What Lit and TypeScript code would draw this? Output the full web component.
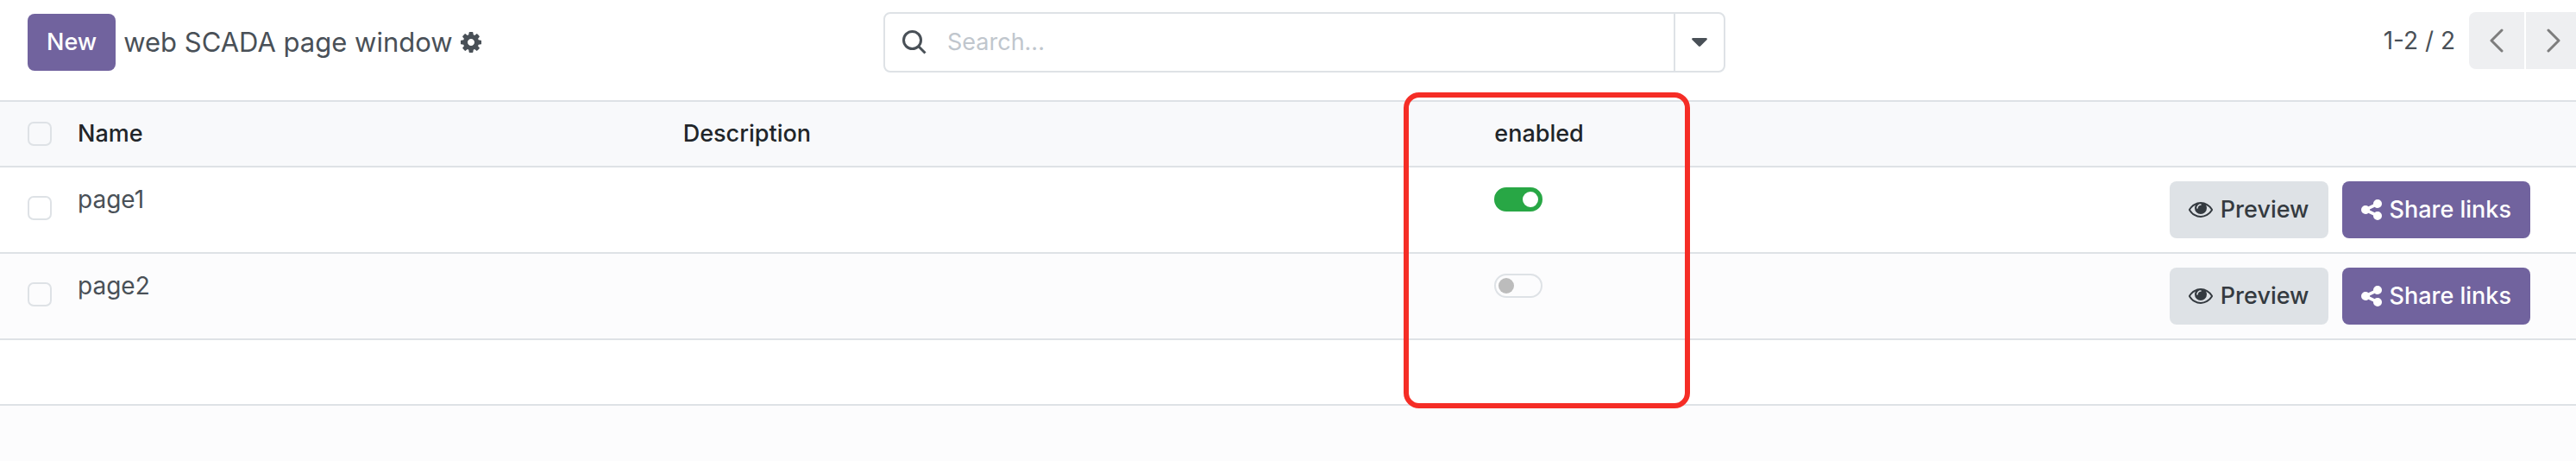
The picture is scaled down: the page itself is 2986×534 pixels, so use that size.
import { LitElement, html, css, svg } from "lit";
import { customElement, state } from "lit/decorators.js";

interface PageRow {
  name: string;
  description: string;
  enabled: boolean;
}

const cogIcon = html`<svg class="icon" width="24" height="24" viewBox="128 128 1536 1536" aria-hidden="true">
  ${svg`<path d="M1152 896q0-106-75-181t-181-75-181 75-75 181 75 181 181 75 181-75 75-181zm512-109v222q0 12-8 23t-20 13l-185 28q-19 54-39 91 35 50 107 138 10 12 10 25t-9 23q-27 37-99 108t-94 71q-12 0-26-9l-138-108q-44 23-91 38-16 136-29 186-7 28-36 28h-222q-14 0-24.5-8.5t-11.5-21.5l-28-184q-49-16-90-37l-141 107q-10 9-25 9-14 0-25-11-126-114-165-168-7-10-7-23 0-12 8-23 15-21 51-66.5t54-70.5q-27-50-41-99l-183-27q-13-2-21-12.5t-8-23.5v-222q0-12 8-23t19-13l186-28q14-46 39-92-40-57-107-138-10-12-10-24 0-10 9-23 26-36 98.5-107.5t94.5-71.5q13 0 26 10l138 107q44-23 91-38 16-136 29-186 7-28 36-28h222q14 0 24.5 8.5t11.5 21.5l28 184q49 16 90 37l142-107q9-9 24-9 13 0 25 10 129 119 165 170 7 8 7 22 0 12-8 23-15 21-51 66.5t-54 70.5q26 50 41 98l183 28q13 2 21 12.5t8 23.5z"/>`}
</svg>`;

const eyeIcon = html`<svg class="icon" width="28" height="18" viewBox="0 384 1792 1152" aria-hidden="true">
  ${svg`<path d="M1664 960q-152-236-381-353 61 104 61 225 0 185-131.5 316.5t-316.5 131.5-316.5-131.5-131.5-316.5q0-121 61-225-229 117-381 353 133 205 333.5 326.5t434.5 121.5 434.5-121.5 333.5-326.5zm-720-384q0-20-14-34t-34-14q-125 0-214.5 89.5t-89.5 214.5q0 20 14 34t34 14 34-14 14-34q0-86 61-147t147-61q20 0 34-14t14-34zm848 384q0 34-20 69-140 230-376.5 368.5t-499.5 138.5-499.5-139-376.5-368q-20-35-20-69t20-69q140-229 376.5-368t499.5-139 499.5 139 376.5 368q20 35 20 69z"/>`}
</svg>`;

const shareIcon = html`<svg class="icon" width="24" height="24" viewBox="128 128 1536 1536" aria-hidden="true">
  ${svg`<path d="M1344 1024q133 0 226.5 93.5t93.5 226.5-93.5 226.5-226.5 93.5-226.5-93.5-93.5-226.5q0-12 2-34l-360-180q-92 86-218 86-133 0-226.5-93.5t-93.5-226.5 93.5-226.5 226.5-93.5q126 0 218 86l360-180q-2-22-2-34 0-133 93.5-226.5t226.5-93.5 226.5 93.5 93.5 226.5-93.5 226.5-226.5 93.5q-126 0-218-86l-360 180q2 22 2 34t-2 34l360 180q92-86 218-86z"/>`}
</svg>`;

const searchIcon = html`<svg width="28" height="28" viewBox="0 0 28 28" fill="none" stroke="currentColor" stroke-width="3" aria-hidden="true">
  ${svg`<circle cx="11.5" cy="11.5" r="10"/><path d="M18.5 18.5l8 8"/>`}
</svg>`;

const caretIcon = html`<svg class="icon" width="18" height="10" viewBox="0 0 18 10" aria-hidden="true">
  ${svg`<path d="M1.5 0h15q1.5 0 1.300 1.400-.1.400-.5.900l-7.300 7.200q-1 .8-2 0l-7.300-7.200q-.5-.5-.5-.9-.2-1.400 1.300-1.400z"/>`}
</svg>`;

const chevron = (d: string) => html`<svg width="16" height="28" viewBox="0 0 16 28" fill="none" stroke="currentColor" stroke-width="3" stroke-linecap="round" stroke-linejoin="round" aria-hidden="true">
  ${svg`<path d=${d}/>`}
</svg>`;

@customElement("app-root")
export class AppRoot extends LitElement {
  static styles = css`
    :host {
      display: block;
      min-height: 100vh;
      overflow: hidden;
      background: #fcfcfd;
      color: #495057;
      font: 400 28px/42px Inter, "Noto Sans", sans-serif;
    }
    * {
      box-sizing: border-box;
    }
    button,
    input {
      margin: 0;
      font: inherit;
      color: inherit;
    }
    button {
      display: inline-flex;
      align-items: center;
      justify-content: center;
      border: 0;
      padding: 0;
      background: none;
      cursor: pointer;
    }
    svg {
      display: block;
      flex: none;
    }
    .icon {
      fill: currentColor;
    }
    .panel {
      display: grid;
      grid-template-columns: 992fr 976fr 986fr;
      align-items: start;
      padding: 14px 0 32px 32px;
      background: #fff;
      border-bottom: 2px solid #dee2e6;
    }
    .crumbs {
      display: flex;
      align-items: center;
      gap: 9px;
      padding-top: 2px;
    }
    .title {
      margin: 0;
      font-size: 31px;
      font-weight: 400;
      white-space: nowrap;
    }
    .btn {
      height: 66px;
      padding: 0 22px;
      gap: 9px;
      border-radius: 8px;
      font-size: 27px;
      font-weight: 500;
      white-space: nowrap;
    }
    .primary {
      background: #71639e;
      color: #fff;
    }
    .secondary {
      background: #dee2e6;
      color: #343a40;
    }
    .search {
      display: flex;
      height: 70px;
      border: 2px solid #dee2e6;
      border-radius: 8px;
    }
    .search-box {
      display: flex;
      flex: 1;
      align-items: center;
      gap: 24px;
      padding-left: 20px;
    }
    .search-input {
      flex: 1;
      min-width: 0;
      border: 0;
      padding: 0;
      outline: 0;
      background: none;
      font-size: 27px;
    }
    .search-input::placeholder {
      color: #c0c6cd;
      opacity: 1;
    }
    .search-toggle {
      width: 58px;
      border-left: 2px solid #dee2e6;
    }
    .pager {
      display: flex;
      align-items: center;
      justify-content: flex-end;
      gap: 2px;
    }
    .range {
      margin-right: 14px;
    }
    .page-btn {
      width: 64px;
      height: 66px;
      background: #eeeff1;
      color: #7d7d7d;
    }
    .prev {
      border-radius: 8px 0 0 8px;
    }
    .next {
      margin-right: -6px;
    }
    .list {
      width: 100%;
      table-layout: fixed;
      border-collapse: separate;
      border-spacing: 0;
    }
    .col-check {
      width: 82px;
    }
    .col-name {
      width: 23.5%;
    }
    .col-description {
      width: 31.5%;
    }
    .col-enabled {
      width: 11%;
    }
    th,
    td {
      padding: 16px 8px;
      border-bottom: 2px solid #dee2e6;
      text-align: left;
      vertical-align: top;
      font-weight: 400;
    }
    th {
      background: #f8f9fb;
      color: #212529;
      font-size: 27px;
      font-weight: 500;
      position: relative;
    }
    tbody tr:nth-child(odd) td {
      background: #fff;
    }
    td {
      height: 76px;
    }
    .check-cell {
      padding-left: 32px;
      vertical-align: middle;
    }
    td.check-cell {
      padding-bottom: 20px;
    }
    .check {
      display: block;
      appearance: none;
      width: 28px;
      height: 28px;
      border: 2px solid #dee2e6;
      border-radius: 7px;
      background: transparent;
    }
    .check:checked {
      background: #71639e;
    }
    .switch {
      display: flex;
      align-items: center;
      appearance: none;
      width: 56px;
      height: 28px;
      margin-top: 7px;
      padding: 0 3px;
      border: 2px solid #dee2e6;
      border-radius: 14px;
    }
    .switch::before {
      content: "";
      width: 18px;
      height: 18px;
      border-radius: 50%;
      background: #bcbcbc;
    }
    .switch:checked {
      justify-content: flex-end;
      border-color: #28a745;
      background: #28a745;
    }
    .switch:checked::before {
      background: #fff;
    }
    .actions {
      display: flex;
      justify-content: flex-end;
      gap: 16px;
      padding-right: 45px;
    }
    .highlight {
      position: absolute;
      z-index: 1;
      top: -11px;
      left: -97px;
      width: 332px;
      height: 366px;
      border: 6px solid #f52d26;
      border-radius: 18px;
      pointer-events: none;
    }
  `;

  @state() private rows: PageRow[] = [
    { name: "page1", description: "", enabled: true },
    { name: "page2", description: "", enabled: false },
  ];

  private toggle(index: number) {
    this.rows = this.rows.map((r, i) => (i === index ? { ...r, enabled: !r.enabled } : r));
  }

  private renderRow(row: PageRow, index: number) {
    return html`<tr>
      <td class="check-cell"><input class="check" type="checkbox" aria-label="Select ${row.name}" /></td>
      <td>${row.name}</td>
      <td>${row.description}</td>
      <td>
        <input
          class="switch"
          type="checkbox"
          role="switch"
          aria-label="Enable ${row.name}"
          .checked=${row.enabled}
          @change=${() => this.toggle(index)}
        />
      </td>
      <td>
        <div class="actions">
          <button class="btn secondary" type="button">${eyeIcon}<span>Preview</span></button>
          <button class="btn primary" type="button">${shareIcon}<span>Share links</span></button>
        </div>
      </td>
    </tr>`;
  }

  render() {
    return html`
      <header class="panel">
        <div class="crumbs">
          <button class="btn primary" type="button">New</button>
          <h1 class="title">web SCADA page window</h1>
          <button type="button" aria-label="Actions">${cogIcon}</button>
        </div>
        <div class="search" role="search">
          <label class="search-box">
            ${searchIcon}
            <input class="search-input" type="text" placeholder="Search..." aria-label="Search" />
          </label>
          <button class="search-toggle" type="button" aria-label="Search options">${caretIcon}</button>
        </div>
        <nav class="pager" aria-label="Pager">
          <span class="range">1-2 / 2</span>
          <button class="page-btn prev" type="button" aria-label="Previous">${chevron("M14 2L2 14l12 12")}</button>
          <button class="page-btn next" type="button" aria-label="Next">${chevron("M2 2l12 12L2 26")}</button>
        </nav>
      </header>
      <table class="list">
        <colgroup>
          <col class="col-check" />
          <col class="col-name" />
          <col class="col-description" />
          <col class="col-enabled" />
          <col />
        </colgroup>
        <thead>
          <tr>
            <th class="check-cell"><input class="check" type="checkbox" aria-label="Select all" /></th>
            <th scope="col">Name</th>
            <th scope="col">Description</th>
            <th scope="col">enabled<div class="highlight"></div></th>
            <th></th>
          </tr>
        </thead>
        <tbody>
          ${this.rows.map((row, i) => this.renderRow(row, i))}
          <tr>
            <td colspan="5"></td>
          </tr>
        </tbody>
      </table>
    `;
  }
}
